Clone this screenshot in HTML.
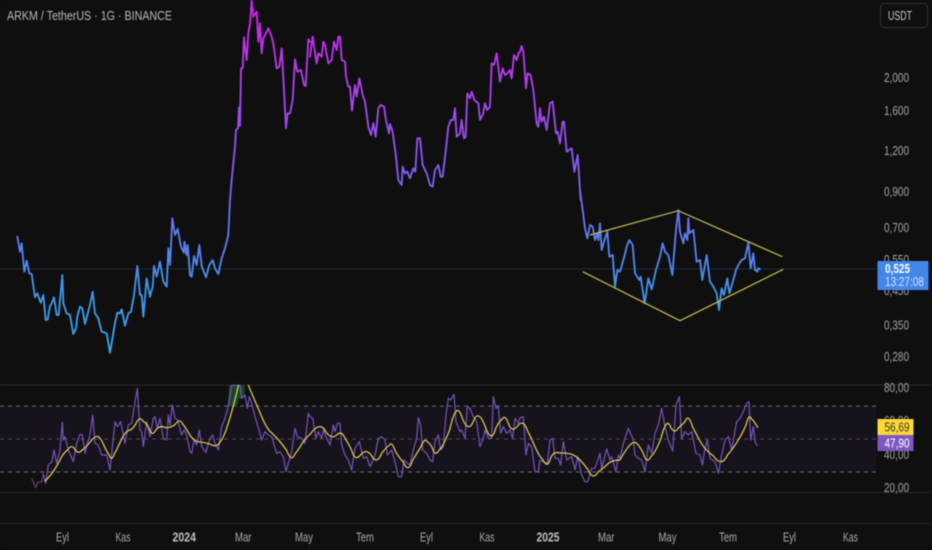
<!DOCTYPE html>
<html><head><meta charset="utf-8"><title>ARKM / TetherUS</title>
<style>
html,body{margin:0;padding:0;background:#0f0f0f;width:932px;height:550px;overflow:hidden}
svg{display:block;filter:blur(.45px)}
text{font-family:"Liberation Sans",sans-serif;font-size:12.5px;stroke-width:.15px}
</style></head><body>
<svg width="932" height="550" viewBox="0 0 932 550">
<defs>
<linearGradient id="pg" gradientUnits="userSpaceOnUse" x1="0" y1="0" x2="0" y2="350">
<stop offset="0" stop-color="#d41ff0"/><stop offset=".2" stop-color="#b63aea"/><stop offset=".45" stop-color="#8a55f0"/><stop offset=".68" stop-color="#5c7cf0"/><stop offset=".85" stop-color="#3d96ea"/><stop offset="1" stop-color="#35a6e8"/>
</linearGradient>
<mask id="pm" maskUnits="userSpaceOnUse" x="0" y="0" width="932" height="380">
<g fill="none" stroke="#fff" stroke-width="5.6" stroke-linejoin="round" stroke-linecap="round">
<polyline transform="translate(0,180) scale(.33333)" points="52,170 60,215 65,190 73,275 80,242 88,280 95,282 105,352 112,340 122,368 130,345 137,420 143,418 150,378 155,370 162,352 170,405 176,405 182,340 187,285 190,370 200,400 210,405 220,462 228,445 232,410 240,380 247,385 255,432 262,405 270,375 278,335 285,400 295,415 305,455 320,460 330,518 345,430 352,398 360,400 365,388 375,437 385,400 393,395 402,345 412,258 420,345 425,345 430,410 440,295 450,350 458,320 462,258 470,290 480,245 490,305 500,320 505,205 510,255 517,115 525,165 533,147 543,200 552,218 553,185 560,225 563,195 570,285 575,290 582,228 590,255 598,195 605,258 618,292 628,255 638,240 645,265 655,282 665,235 675,205 685,165 690,60 695,0"/>
<polyline transform="scale(.33333)" points="695,540 705,440 708,390 714,385 717,322 720,378 723,205 728,205 732,112 740,180 745,100 750,70 755,0 760,50 770,35 775,125 780,70 785,160 790,115 800,95 805,85 815,110 820,130 830,205 838,200 845,145 850,235 858,385 863,340 870,340 878,300 885,178 892,215 903,210 912,255 917,258 925,118 930,125"/>
<polyline transform="translate(310,20) scale(.33333)" points="0,110 8,50 20,130 25,100 35,110 40,65 45,75 55,130 65,120 72,65 80,90 85,50 90,50 95,120 105,125 108,170 115,200 120,200 126,272 135,195 140,230 148,175 158,225 165,245 175,320 183,345 190,310 197,350 205,265 212,255 222,260 228,300 237,340 240,312 248,335 258,410 265,480 275,495 278,440 285,460 292,455 300,475 310,445 316,455 322,355 330,355 338,435 350,460 360,495 368,500 375,450 385,435 392,470 398,470 408,385 415,320 422,300 430,300 435,265 440,350 450,340 455,300 462,355 467,350 472,220 480,235 485,215 493,240 505,250 510,300 520,280 525,250 532,270 540,260 545,130 552,135 560,100 570,185 578,145 585,165 592,160 600,150 605,175 612,105 620,120 625,100 630,95 635,78 640,95 648,205 653,160 662,165 670,210 680,310 685,320 690,265 695,305 702,290 710,330 720,250 728,245 738,340 743,335 750,370 758,305 762,305 770,395 785,385 793,455 803,405 812,540"/>
<polyline transform="translate(570,190) scale(.33333)" points="30,0 38,60 45,115 52,145 60,105 68,110 75,150 82,130 85,150 90,100 95,180 105,145 112,125 118,200 128,195 135,290 142,240 150,245 163,200 170,170 178,150 188,165 195,250 208,270 212,260 224,340 235,265 245,298 258,240 270,200 278,160 285,185 295,195 307,255 318,120 325,60 330,125 340,160 345,130 352,150 355,85 358,130 370,120 380,215 390,210 397,270 410,195 420,275 430,290 440,310 447,360 455,295 462,315 472,265 478,310 490,270 498,240 505,225 515,210 525,205 535,158 542,235 550,190 555,240 562,245 565,235 570,237"/>
</g></mask>
</defs>
<rect width="932" height="550" fill="#0f0f0f"/>

<!-- last price line -->
<line x1="0" y1="269" x2="877" y2="269" stroke="#2c4a68" stroke-width="1" stroke-dasharray="1 1"/>

<!-- price -->
<rect x="0" y="0" width="932" height="380" fill="url(#pg)" mask="url(#pm)"/>

<!-- diamond -->
<g fill="none" stroke="#c4bd4e" stroke-width="1.2">
<polyline points="590,235 678.3,210.7 782.3,256.7"/>
<polyline points="582.7,271.7 680,320.7 783.3,269.3"/>
</g>

<!-- RSI pane -->
<line x1="0" y1="385" x2="932" y2="385" stroke="#2a2a2a"/>
<line x1="0" y1="492.5" x2="932" y2="492.5" stroke="#2a2a2a"/>
<line x1="0" y1="523.5" x2="932" y2="523.5" stroke="#2a2a2a"/>
<rect x="0" y="406" width="876" height="66" fill="#17131d"/>
<g stroke="#6f6f6f" stroke-width="1" stroke-dasharray="4 4">
<line x1="0" y1="406" x2="876" y2="406"/>
<line x1="0" y1="439" x2="876" y2="439" stroke="#4d4a52"/>
<line x1="0" y1="472" x2="876" y2="472"/>
</g>
<polygon points="229,385.5 245,385.5 244,398 239,399 237,406 228,406" fill="#18452c"/>

<g fill="none" stroke="#7554b8" stroke-width="3.6" stroke-linejoin="round">
<polyline transform="translate(0,375) scale(.33333)" stroke="#5f3f78" points="95,310 107,338 113,322 125,322 130,295"/>
<polyline transform="translate(0,375) scale(.33333)" points="130,295 137,325 145,270 150,265 155,262 162,225 170,265 180,225 187,142 190,195 195,185 205,225 220,260 230,205 240,178 247,180 255,235 262,205 270,180 278,120 285,205 295,210 305,240 320,240 330,285 345,140 352,155 362,140 375,205 385,150 395,145 402,100 412,40 420,165 425,170 430,215 440,140 450,185 460,130 465,125 472,160 480,130 490,190 500,195 505,120 510,150 517,90 525,130 533,135 545,180 552,165 560,180 570,230 575,235 582,195 590,210 598,165 605,215 618,232 628,195 638,180 645,205 655,225 665,155 675,130 685,95 690,60 695,31 720,31 725,70 735,60 742,100 748,65 755,85 765,125 780,175 785,195 795,170 805,180 815,185 830,235 840,230 850,245 858,290 865,265 875,230 885,160 892,185 905,190 915,205 925,115 930,125"/>
<polyline transform="translate(310,375) scale(.33333)" points="0,125 8,130 18,190 25,170 35,190 40,165 50,190 60,210 70,150 75,170 82,145 90,145 95,210 105,240 115,255 125,285 135,220 148,200 160,250 170,245 180,275 195,240 205,190 215,185 225,195 232,240 245,225 255,260 265,305 275,305 282,255 292,265 300,270 310,225 320,190 325,128 332,150 338,225 350,235 360,255 368,260 375,200 385,180 392,225 400,215 408,120 415,70 422,75 432,58 438,140 450,170 455,165 465,190 472,95 480,100 490,125 500,140 510,215 520,190 525,165 535,190 545,190 550,65 558,100 565,95 572,175 580,155 590,175 600,165 608,190 615,130 625,145 630,128 640,125 648,240 655,205 665,215 675,290 685,290 690,255 700,260 712,265 720,195 728,190 735,250 745,250 752,270 760,200 770,255 785,245 795,285 803,245 815,300 825,320 833,320 845,280 855,280 870,235 875,280 890,222 900,255 905,245 918,290 925,240 930,250"/>
<polyline transform="translate(620,375) scale(.33333)" points="0,250 10,205 25,160 40,195 45,240 55,250 65,255 75,290 85,210 95,235 105,175 115,150 125,100 135,155 145,195 158,228 168,90 178,65 185,190 195,170 205,180 215,170 228,235 240,240 247,270 255,220 262,195 270,250 285,260 295,295 305,240 315,195 325,185 335,225 350,140 360,130 370,110 380,85 387,80 392,195 400,155 405,200 412,212"/>
</g>
<g fill="none" stroke="#e6d24f" stroke-width="3.6" stroke-linecap="round">
<path transform="translate(0,375) scale(.33333)" d="M135,318 Q150,305 162.5,285 Q175,265 182.5,250 Q190,235 202.5,225 Q215,206 225,223.5 Q235,239 245,226 Q255,220 270,201.5 Q285,183 292.5,184 Q300,185 310,207.5 Q320,230 327.5,240 Q335,261 342.5,237.5 Q350,225 360,202.5 Q370,180 377.5,172.5 Q385,165 390,165 Q395,165 406.5,148.5 Q418,120.5 429,138.5 Q440,145 447.5,160 Q455,187.5 467.5,165 Q480,148.75 495,157.5 Q510,160 525,149 Q540,128 547.5,146.5 Q555,155 567.5,176.5 Q580,198 595,200 Q610,202 630,207 Q650,220 660,201 Q670,190 680,160 Q690,130 700,92.5 Q710,55 715,31"/>
<path transform="translate(0,375) scale(.33333)" d="M745,31 Q770,90 785,125 Q800,160 810,169 Q820,178 832.5,191.5 Q845,205 860,226.5 Q875,264.5 885,236.5 Q895,225 905,207.5 Q915,190 930,178"/>
<path transform="translate(310,375) scale(.33333)" d="M0,178 Q30,136 47.5,170 Q65,195 80,180 Q95,165 105,190 Q115,205 125,226 Q135,262 152.5,238.5 Q170,219.5 185,242.5 Q200,271 215,235 Q230,215 237.5,211.5 Q245,197 255,226.5 Q265,245 280,261.5 Q295,297 307.5,256.5 Q320,235 332.5,216 Q345,185.5 352.5,201 Q360,205 367.5,220 Q375,247.5 387.5,225 Q400,215 420,161.5 Q440,69.5 457.5,131.5 Q475,175 490,139 Q505,100 525,153 Q545,210 557.5,159 Q570,135 577.5,131.5 Q585,118 595,145 Q605,175 622.5,153.5 Q640,129.5 652.5,167.5 Q665,190 675,215 Q685,240 698.5,254 Q712,283 721,251.5 Q730,227 747.5,234 Q765,233 780,236.5 Q795,240 807.5,252.5 Q820,265 834,284 Q848,318 864,291.5 Q880,280 892.5,267.5 Q905,255 930,255"/>
<path transform="translate(620,375) scale(.33333)" d="M0,255 Q35,190 50,205 Q60,215 70,235 Q80,270 92.5,245 Q105,235 122.5,191.5 Q140,121 152.5,158 Q165,177.5 175,159 Q185,150 195,140 Q205,112.5 217.5,155 Q230,180 242.5,202.5 Q255,225 280,242.5 Q305,279 322.5,240 Q340,220 355,195 Q370,170 378.5,148.5 Q387,114 393.5,131 Q400,135 413,157"/>
</g>

<!-- title -->
<text x="7" y="20" fill="#b8b8b8" textLength="165" lengthAdjust="spacingAndGlyphs">ARKM / TetherUS · 1G · BINANCE</text>

<!-- currency box -->
<rect x="880.5" y="3.5" width="47" height="24" rx="4" fill="none" stroke="#333"/>
<text x="888" y="20" fill="#c8c8c8" textLength="24" lengthAdjust="spacingAndGlyphs">USDT</text>

<!-- price axis -->
<g fill="#a4a4a4">
<text x="884" y="82" textLength="25" lengthAdjust="spacingAndGlyphs">2,000</text>
<text x="884" y="115" textLength="25" lengthAdjust="spacingAndGlyphs">1,600</text>
<text x="884" y="155" textLength="25" lengthAdjust="spacingAndGlyphs">1,200</text>
<text x="884" y="196" textLength="25" lengthAdjust="spacingAndGlyphs">0,900</text>
<text x="884" y="232" textLength="25" lengthAdjust="spacingAndGlyphs">0,700</text>
<text x="884" y="264" textLength="25" lengthAdjust="spacingAndGlyphs">0,550</text>
<text x="884" y="295" textLength="25" lengthAdjust="spacingAndGlyphs">0,450</text>
<text x="884" y="329.5" textLength="25" lengthAdjust="spacingAndGlyphs">0,350</text>
<text x="884" y="361" textLength="25" lengthAdjust="spacingAndGlyphs">0,280</text>
<text x="884" y="392" textLength="25" lengthAdjust="spacingAndGlyphs">80,00</text>
<text x="884" y="425" textLength="25" lengthAdjust="spacingAndGlyphs">60,00</text>
<text x="884" y="459" textLength="25" lengthAdjust="spacingAndGlyphs">40,00</text>
<text x="884" y="492" textLength="25" lengthAdjust="spacingAndGlyphs">20,00</text>
</g>

<!-- price tag -->
<rect x="877.5" y="261" width="51" height="29" fill="#4286e8"/>
<text x="885" y="273" fill="#fff" font-weight="bold" textLength="25" lengthAdjust="spacingAndGlyphs">0,525</text>
<text x="885" y="286" fill="#d2e2fa" textLength="39" lengthAdjust="spacingAndGlyphs">13:27:08</text>

<!-- RSI tags -->
<rect x="877.5" y="419" width="36" height="16" fill="#fdd835"/>
<text x="884.5" y="431.5" fill="#3a3a2a" textLength="25" lengthAdjust="spacingAndGlyphs">56,69</text>
<rect x="877.5" y="435" width="36" height="16" fill="#7e57c2"/>
<text x="884.5" y="447.5" fill="#fff" textLength="25" lengthAdjust="spacingAndGlyphs">47,90</text>

<!-- time axis -->
<g fill="#aaa">
<text x="56" y="541.5" textLength="13" lengthAdjust="spacingAndGlyphs">Eyl</text>
<text x="115.5" y="541.5" textLength="15" lengthAdjust="spacingAndGlyphs">Kas</text>
<text x="172.5" y="541.5" textLength="23.5" lengthAdjust="spacingAndGlyphs" font-weight="bold" fill="#c0c0c0">2024</text>
<text x="235" y="541.5" textLength="16.5" lengthAdjust="spacingAndGlyphs">Mar</text>
<text x="295" y="541.5" textLength="18" lengthAdjust="spacingAndGlyphs">May</text>
<text x="356" y="541.5" textLength="18" lengthAdjust="spacingAndGlyphs">Tem</text>
<text x="420" y="541.5" textLength="13" lengthAdjust="spacingAndGlyphs">Eyl</text>
<text x="479.5" y="541.5" textLength="15" lengthAdjust="spacingAndGlyphs">Kas</text>
<text x="536.5" y="541.5" textLength="23" lengthAdjust="spacingAndGlyphs" font-weight="bold" fill="#c0c0c0">2025</text>
<text x="598" y="541.5" textLength="16.5" lengthAdjust="spacingAndGlyphs">Mar</text>
<text x="658.5" y="541.5" textLength="18" lengthAdjust="spacingAndGlyphs">May</text>
<text x="719" y="541.5" textLength="18" lengthAdjust="spacingAndGlyphs">Tem</text>
<text x="783" y="541.5" textLength="13" lengthAdjust="spacingAndGlyphs">Eyl</text>
<text x="843" y="541.5" textLength="15" lengthAdjust="spacingAndGlyphs">Kas</text>
</g>
</svg>
</body></html>
